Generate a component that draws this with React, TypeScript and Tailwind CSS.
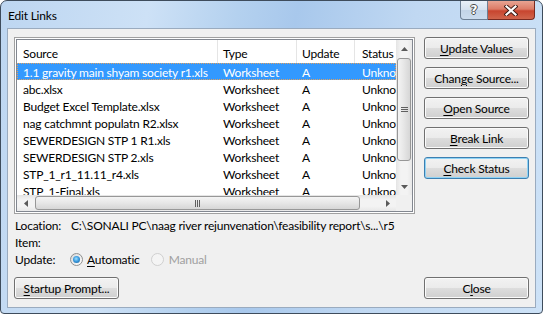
import React from "react";

const rows = [
  "1.1 gravity main shyam society r1.xls",
  "abc.xlsx",
  "Budget Excel Template.xlsx",
  "nag catchmnt populatn R2.xlsx",
  "SEWERDESIGN STP 1 R1.xls",
  "SEWERDESIGN STP 2.xls",
  "STP_1_r1_11.11_r4.xls",
  "STP_1-Final.xls",
];

function U({ children }: { children: React.ReactNode }) {
  return <span className="underline underline-offset-[2px] decoration-[1px]">{children}</span>;
}

function Btn({ children, focused }: { children: React.ReactNode; focused?: boolean }) {
  return (
    <div
      className={
        "h-[22px] w-[105px] flex items-center justify-center pt-[1px] rounded-[3px] border leading-[14px] " +
        (focused
          ? "border-[#3c7fb1] shadow-[inset_0_0_0_1px_#8fd3f5] bg-[linear-gradient(to_bottom,#f2f2f2_0%,#ebebeb_50%,#dddddd_51%,#cfcfcf_100%)]"
          : "border-[#707070] shadow-[inset_0_0_0_1px_#fbfbfb] bg-[linear-gradient(to_bottom,#f2f2f2_0%,#ebebeb_50%,#dddddd_51%,#cfcfcf_100%)]")
      }
    >
      {children}
    </div>
  );
}

function Radio({ checked, disabled }: { checked?: boolean; disabled?: boolean }) {
  return (
    <div
      className={
        "w-[13px] h-[13px] shrink-0 rounded-full border flex items-center justify-center " +
        (disabled
          ? "border-[#cfcfcf] bg-[#f4f4f4]"
          : "border-[#8e8f8f] bg-[linear-gradient(135deg,#d8d8d8,#ffffff)]")
      }
    >
      {checked && (
        <div className="w-[7px] h-[7px] rounded-full bg-[radial-gradient(circle_at_45%_40%,#9fe0ff_0%,#3d9de0_45%,#165a94_100%)]" />
      )}
    </div>
  );
}

function Tri({ dir }: { dir: "up" | "down" | "left" | "right" }) {
  const pts =
    dir === "up"
      ? "0,4 7,4 3.5,0"
      : dir === "down"
      ? "0,0 7,0 3.5,4"
      : dir === "left"
      ? "4,0 4,7 0,3.5"
      : "0,0 0,7 4,3.5";
  const w = dir === "up" || dir === "down" ? 7 : 4;
  const h = dir === "up" || dir === "down" ? 4 : 7;
  return (
    <svg width={w} height={h} viewBox={`0 0 ${w} ${h}`}>
      <polygon points={pts} fill="#5a5a5a" />
    </svg>
  );
}

export default function App() {
  return (
    <div className="w-[543px] h-[314px] font-['Lato',sans-serif] text-[12px] tracking-[-0.2px] text-black">
      <div className="w-[543px] h-[314px] flex flex-col border border-[#3e4c5c] rounded-t-[7px] rounded-b-[4px] overflow-hidden bg-[linear-gradient(100deg,#bdd6f1_0%,#cde1f6_25%,#b4d1ef_40%,#a8c8ec_50%,#c0d8f2_70%,#cde2f7_100%)]">
        {/* title bar */}
        <div className="h-[27px] flex items-start justify-between shrink-0">
          <div className="pl-[7px] pt-[7px] leading-[16px] text-black">Edit Links</div>
          <div className="flex mr-[7px]">
            <div className="w-[28px] h-[19px] border border-[#6d7f94] border-t-0 rounded-bl-[4px] bg-[linear-gradient(to_bottom,#e9f0f8_0%,#d4e1ef_50%,#c3d4e7_51%,#cbdcee_100%)] flex items-center justify-center">
              <span className="font-['DejaVu_Sans',sans-serif] font-bold text-[12px] leading-[12px] text-white [text-shadow:1px_0_#4a4a4a,-1px_0_#4a4a4a,0_1px_#4a4a4a,0_-1px_#4a4a4a]">
                ?
              </span>
            </div>
            <div className="w-[47px] h-[19px] border border-[#7a2a20] border-t-0 border-l-0 rounded-br-[4px] bg-[linear-gradient(to_bottom,#e8a493_0%,#dc7b66_45%,#c8452f_55%,#d0654c_100%)] flex items-center justify-center">
              <svg width="14" height="11" viewBox="0 0 14 11">
                <path d="M2.5 1.5 L11.5 9.5 M11.5 1.5 L2.5 9.5" stroke="#3b1a14" strokeWidth="4" strokeLinecap="square" />
                <path d="M2.5 1.5 L11.5 9.5 M11.5 1.5 L2.5 9.5" stroke="#ffffff" strokeWidth="2.2" strokeLinecap="square" />
              </svg>
            </div>
          </div>
        </div>

        {/* client area */}
        <div className="mx-[6px] h-[280px] shrink-0 border border-[#9aabbf] bg-[#f0f0f0] flex flex-col px-[6px] pt-[8px] pb-[8px]">
          <div className="flex">
            {/* list box */}
            <div className="w-[401px] h-[177px] shrink-0 border border-[#a0a0a0] bg-white p-[1px]">
              <div className="w-full h-full border border-[#828790] flex flex-col">
                <div className="flex h-[155px]">
                  <div className="w-[379px] shrink-0 overflow-hidden">
                    <div className="flex h-[23px] leading-[16px] whitespace-nowrap">
                      <div className="w-[201px] shrink-0 h-full flex items-center pt-[4px] pl-[6px] border-r border-[#e5e5e5]">Source</div>
                      <div className="w-[79px] shrink-0 h-full flex items-center pt-[4px] pl-[5px] border-r border-[#e5e5e5]">Type</div>
                      <div className="w-[58px] shrink-0 h-full flex items-center pt-[4px] pl-[5px] border-r border-[#e5e5e5]">Update</div>
                      <div className="w-[80px] shrink-0 h-full flex items-center pt-[4px] pl-[7px]">Status</div>
                    </div>
                    {rows.map((r, i) => (
                      <div
                        key={r}
                        className={
                          "flex h-[17px] items-start leading-[16px] whitespace-nowrap " +
                          (i === 0 ? "pt-[1px] bg-[#3399ff] text-white border border-dotted border-[#e0a060]" : "pt-[2px]")
                        }
                      >
                        <div className={"shrink-0 overflow-hidden " + (i === 0 ? "w-[200px] pl-[5px]" : "w-[201px] pl-[6px]")}>{r}</div>
                        <div className="w-[79px] shrink-0 pl-[5px]">Worksheet</div>
                        <div className="w-[58px] shrink-0 pl-[5px]">A</div>
                        <div className="w-[80px] shrink-0 pl-[7px]">Unknown</div>
                      </div>
                    ))}
                  </div>
                  {/* vertical scrollbar */}
                  <div className="w-[16px] shrink-0 h-full flex flex-col bg-[linear-gradient(90deg,#e4e4e4,#f3f3f3_30%,#f3f3f3_70%,#e8e8e8)]">
                    <div className="h-[17px] flex items-center justify-center">
                      <Tri dir="up" />
                    </div>
                    <div className="mt-[1px] mx-[1px] h-[103px] rounded-[3px] border border-[#979797] bg-[linear-gradient(90deg,#f4f4f4,#e6e6e6_50%,#d6d6d6)] flex flex-col items-center justify-center gap-[1px]">
                      <div className="w-[7px] h-[1px] bg-[#5f5f5f]" />
                      <div className="w-[7px] h-[1px] bg-[#5f5f5f]" />
                      <div className="w-[7px] h-[1px] bg-[#5f5f5f]" />
                    </div>
                    <div className="flex-1" />
                    <div className="h-[17px] flex items-center justify-center">
                      <Tri dir="down" />
                    </div>
                  </div>
                </div>
                <div className="flex h-[16px]">
                  <div className="w-[379px] shrink-0 h-full flex bg-[linear-gradient(to_bottom,#e4e4e4,#f3f3f3_30%,#f3f3f3_70%,#e8e8e8)]">
                    <div className="w-[17px] flex items-center justify-center">
                      <Tri dir="left" />
                    </div>
                    <div className="ml-[1px] my-[1px] w-[325px] rounded-[3px] border border-[#979797] bg-[linear-gradient(to_bottom,#f4f4f4,#e6e6e6_50%,#d6d6d6)] flex items-center justify-center gap-[1px]">
                      <div className="w-[1px] h-[7px] bg-[#5f5f5f]" />
                      <div className="w-[1px] h-[7px] bg-[#5f5f5f]" />
                      <div className="w-[1px] h-[7px] bg-[#5f5f5f]" />
                    </div>
                    <div className="flex-1" />
                    <div className="w-[17px] flex items-center justify-center">
                      <Tri dir="right" />
                    </div>
                  </div>
                  <div className="w-[16px] h-full bg-[#f0f0f0]" />
                </div>
              </div>
            </div>

            {/* right buttons */}
            <div className="ml-[9px] flex flex-col gap-[8px]">
              <Btn>
                <U>U</U>pdate Values
              </Btn>
              <Btn>
                Chan<U>g</U>e Source...
              </Btn>
              <Btn>
                <U>O</U>pen Source
              </Btn>
              <Btn>
                <U>B</U>reak Link
              </Btn>
              <Btn focused>
                <U>C</U>heck Status
              </Btn>
            </div>
          </div>

          {/* info */}
          <div className="mt-[3px] flex flex-col leading-[17px] pl-[1px]">
            <div className="flex h-[17px] items-center">
              <div className="w-[56px] shrink-0">Location:</div>
              <div className="whitespace-nowrap">C:\SONALI PC\naag river rejunvenation\feasibility report\s...\r5</div>
            </div>
            <div className="flex h-[17px] items-center">
              <div className="w-[56px]">Item:</div>
            </div>
            <div className="flex h-[16px] items-center">
              <div className="w-[55px] shrink-0">Update:</div>
              <Radio checked />
              <div className="ml-[4px]">
                <U>A</U>utomatic
              </div>
              <div className="ml-[11px]">
                <Radio disabled />
              </div>
              <div className="ml-[5px] text-[#a0a0a0]">Manual</div>
            </div>
          </div>

          <div className="mt-auto flex justify-between">
            <Btn>
              <U>S</U>tartup Prompt...
            </Btn>
            <Btn>
              C<U>l</U>ose
            </Btn>
          </div>
        </div>
      </div>
    </div>
  );
}
